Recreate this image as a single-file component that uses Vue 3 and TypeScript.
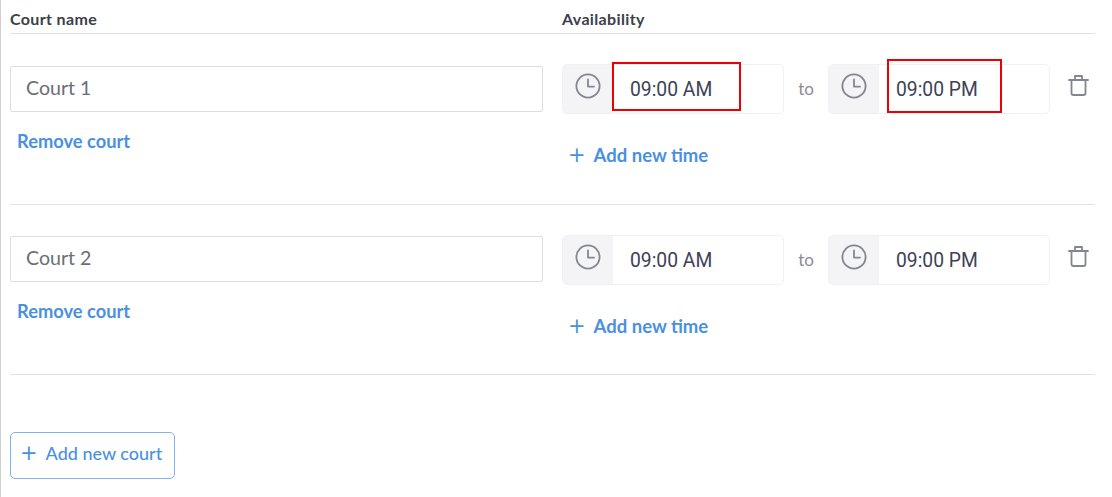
<script setup lang="ts">
const courts = ['Court 1', 'Court 2']
</script>

<template>
  <div class="page">
    <div class="head">
      <div class="col-name">Court name</div>
      <div class="col-avail">Availability</div>
    </div>
    <div v-for="(court, i) in courts" :key="court" class="row">
      <div class="col-name">
        <div class="name-input">{{ court }}</div>
        <a class="remove">Remove court</a>
      </div>
      <div class="col-avail">
        <div class="times">
          <div class="time">
            <span class="clock">
              <svg width="26" height="26" viewBox="0 0 26 26" fill="none" stroke="#84868f" stroke-width="1.8" stroke-linecap="round" stroke-linejoin="round"><circle cx="13" cy="13" r="11.6" /><path d="M13 6.5V13.6H19" /></svg>
            </span>
            <span class="value">09:00 AM</span>
            <span v-if="i === 0" class="mark mark-a"></span>
          </div>
          <span class="to">to</span>
          <div class="time">
            <span class="clock">
              <svg width="26" height="26" viewBox="0 0 26 26" fill="none" stroke="#84868f" stroke-width="1.8" stroke-linecap="round" stroke-linejoin="round"><circle cx="13" cy="13" r="11.6" /><path d="M13 6.5V13.6H19" /></svg>
            </span>
            <span class="value">09:00 PM</span>
            <span v-if="i === 0" class="mark mark-b"></span>
          </div>
          <svg class="trash" width="21" height="21" viewBox="0 0 21 21" fill="none" stroke="#84868f" stroke-width="1.8" stroke-linecap="round" stroke-linejoin="round"><path d="M1 5H20M7 5V1H14V5M3.5 5V18C3.5 19.2 4.3 20 5.5 20H15.5C16.7 20 17.5 19.2 17.5 18V5" /></svg>
        </div>
        <a class="add-time"><span class="plus">+</span>Add new time</a>
      </div>
    </div>
    <button class="add-court"><span class="plus">+</span>Add new court</button>
  </div>
</template>

<style>
html, body { margin: 0; background: #fff; }
</style>

<style scoped>
.page {
  box-sizing: border-box;
  width: 1112px;
  height: 497px;
  overflow: hidden;
  padding-left: 9px;
  border-left: 1px solid #cfcfcf;
  font-family: Lato, "Open Sans", sans-serif;
}
.head, .row {
  display: flex;
  width: 1085px;
  border-bottom: 1px solid #e2e2e2;
}
.head {
  box-sizing: border-box;
  height: 34px;
  padding-top: 10px;
  font-size: 16px;
  font-weight: 700;
  letter-spacing: 0.35px;
  line-height: 17px;
  color: #3c4048;
}
.row {
  box-sizing: border-box;
  height: 170px;
  padding-top: 30px;
}
.row:nth-child(2) { height: 171px; }
.row:nth-child(2) .name-input { margin-top: 2px; }
.col-name { width: 552px; }
.col-avail { flex: 1; }
.name-input {
  box-sizing: border-box;
  width: 533px;
  height: 46px;
  margin-top: 1px;
  padding-left: 15px;
  border: 1px solid #dedede;
  border-radius: 2px;
  font-size: 19.6px;
  line-height: 41px;
  color: #6b6e75;
}
.remove {
  display: block;
  margin: 18px 0 0 7px;
  font-size: 18.3px;
  font-weight: 700;
  line-height: 22px;
  color: #4a90e2;
}
.times {
  display: flex;
  align-items: center;
  height: 50px;
}
.time {
  position: relative;
  box-sizing: border-box;
  display: flex;
  align-items: center;
  width: 222px;
  height: 50px;
  border: 1px solid #f1f1f4;
  border-radius: 5px;
  overflow: visible;
}
.clock {
  display: flex;
  align-items: center;
  justify-content: center;
  width: 50px;
  height: 48px;
  background: #f4f4f7;
  border-radius: 4px 0 0 4px;
}
.clock svg { margin-top: -6px; }
.value {
  margin-left: 17px;
  font-family: Roboto, sans-serif;
  font-size: 19.3px;
  color: #3d4257;
}
.mark {
  position: absolute;
  box-sizing: border-box;
  border: 2px solid #ee0000;
}
.mark-a { left: 49px; top: -3px; width: 129px; height: 49px; }
.mark-b { left: 58px; top: -6px; width: 115px; height: 54px; }
.to {
  width: 44px;
  padding-bottom: 2px;
  text-align: center;
  font-size: 17px;
  color: #8a8d94;
}
.trash { margin-left: 18px; margin-top: -7px; }
.add-time {
  display: flex;
  align-items: center;
  margin: 29px 0 0 6px;
  font-size: 18.5px;
  font-weight: 700;
  line-height: 24px;
  color: #4a90e2;
}
.plus {
  font-family: "DejaVu Sans", sans-serif;
  font-weight: 400;
  font-size: 21px;
  margin-right: 8px;
}
.add-court {
  display: flex;
  align-items: center;
  box-sizing: border-box;
  width: 165px;
  height: 47px;
  margin-top: 57px;
  padding: 0 0 6px 9px;
  background: #fff;
  border: 1px solid #7db3ee;
  border-radius: 5px;
  font-family: inherit;
  font-size: 18px;
  font-weight: 500;
  color: #4a90e2;
}
</style>
